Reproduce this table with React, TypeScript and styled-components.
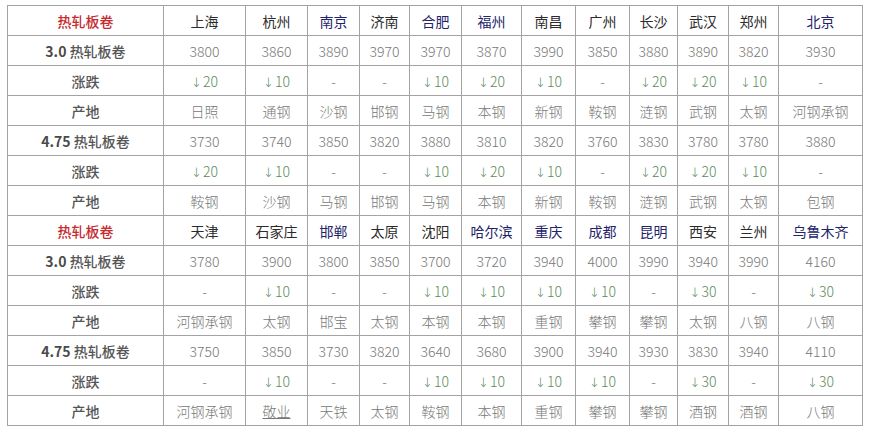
import { createGlobalStyle } from 'styled-components';
import styled from 'styled-components';

const GlobalStyle = createGlobalStyle`
  body {
    margin: 0;
    background: #fff;
    font-family: "Noto Sans CJK SC", "Noto Sans", sans-serif;
  }
`;

const Page = styled.div`
  padding: 5px 0 0 7px;
`;

const Table = styled.table`
  border-collapse: collapse;
  table-layout: fixed;
  width: 855px;
  font-size: 14px;
`;

const Cell = styled.td<{ $tone?: 'data' | 'city' | 'navy' | 'up' }>`
  height: 29px;
  padding: 0;
  border: 1px solid #a3a3a3;
  text-align: center;
  white-space: nowrap;
  overflow: hidden;
  color: ${(p) =>
    p.$tone === 'city' ? '#2b2b2b' :
    p.$tone === 'navy' ? '#23236a' :
    p.$tone === 'up' ? '#5b8a5b' : '#777'};
  font-weight: ${(p) => (p.$tone === 'city' || p.$tone === 'navy' ? 400 : 300)};
`;

const Arrow = styled.span`
  font-family: "DejaVu Sans", sans-serif;
  font-size: 13px;
  margin-right: 1px;
`;

const Label = styled.td<{ $red?: boolean }>`
  height: 29px;
  padding: 0;
  border: 1px solid #a3a3a3;
  text-align: center;
  font-weight: 500;
  color: ${(p) => (p.$red ? '#c62a2f' : '#555')};
`;

const Size = styled.b`
  font-weight: 700;
  color: #4a4a4a;
`;

const Under = styled.span`
  text-decoration: underline;
`;

const widths = [156, 82, 62, 52, 50, 52, 60, 54, 54, 48, 51, 50, 84];

type Block = {
  cities: string[];
  navy: string[];
  thin: string[];
  thinDiff: string[];
  thinFrom: string[];
  thick: string[];
  thickDiff: string[];
  thickFrom: string[];
};

const blocks: Block[] = [
  {
    cities: ['上海', '杭州', '南京', '济南', '合肥', '福州', '南昌', '广州', '长沙', '武汉', '郑州', '北京'],
    navy: ['南京', '合肥', '福州', '北京'],
    thin: ['3800', '3860', '3890', '3970', '3970', '3870', '3990', '3850', '3880', '3890', '3820', '3930'],
    thinDiff: ['20', '10', '', '', '10', '20', '10', '', '20', '20', '10', ''],
    thinFrom: ['日照', '通钢', '沙钢', '邯钢', '马钢', '本钢', '新钢', '鞍钢', '涟钢', '武钢', '太钢', '河钢承钢'],
    thick: ['3730', '3740', '3850', '3820', '3880', '3810', '3820', '3760', '3830', '3780', '3780', '3880'],
    thickDiff: ['20', '10', '', '', '10', '20', '10', '', '20', '20', '10', ''],
    thickFrom: ['鞍钢', '沙钢', '马钢', '邯钢', '马钢', '本钢', '新钢', '鞍钢', '涟钢', '武钢', '太钢', '包钢'],
  },
  {
    cities: ['天津', '石家庄', '邯郸', '太原', '沈阳', '哈尔滨', '重庆', '成都', '昆明', '西安', '兰州', '乌鲁木齐'],
    navy: ['邯郸', '哈尔滨', '重庆', '成都', '昆明', '乌鲁木齐'],
    thin: ['3780', '3900', '3800', '3850', '3700', '3720', '3940', '4000', '3990', '3940', '3990', '4160'],
    thinDiff: ['', '10', '', '', '10', '10', '10', '10', '', '30', '', '30'],
    thinFrom: ['河钢承钢', '太钢', '邯宝', '太钢', '本钢', '本钢', '重钢', '攀钢', '攀钢', '太钢', '八钢', '八钢'],
    thick: ['3750', '3850', '3730', '3820', '3640', '3680', '3900', '3940', '3930', '3830', '3940', '4110'],
    thickDiff: ['', '10', '', '', '10', '10', '10', '10', '', '30', '', '30'],
    thickFrom: ['河钢承钢', '敬业', '天铁', '太钢', '鞍钢', '本钢', '重钢', '攀钢', '攀钢', '酒钢', '酒钢', '八钢'],
  },
];

const DiffRow = ({ values }: { values: string[] }) => (
  <tr>
    <Label>涨跌</Label>
    {values.map((v, i) =>
      v ? <Cell key={i} $tone="up"><Arrow>↓</Arrow>{v}</Cell> : <Cell key={i}>-</Cell>
    )}
  </tr>
);

const PlainRow = ({ label, size, values }: { label: string; size?: string; values: string[] }) => (
  <tr>
    <Label>{size && <Size>{size} </Size>}{label}</Label>
    {values.map((v, i) => (
      <Cell key={i}>{v === '敬业' ? <Under>{v}</Under> : v}</Cell>
    ))}
  </tr>
);

const App = () => (
  <Page>
    <GlobalStyle />
    <Table>
      <colgroup>
        {widths.map((w, i) => <col key={i} style={{ width: w }} />)}
      </colgroup>
      <tbody>
        {blocks.map((b, bi) => [
          <tr key={`h${bi}`}>
            <Label $red>热轧板卷</Label>
            {b.cities.map((c) => (
              <Cell key={c} $tone={b.navy.includes(c) ? 'navy' : 'city'}>{c}</Cell>
            ))}
          </tr>,
          <PlainRow key={`a${bi}`} size="3.0" label="热轧板卷" values={b.thin} />,
          <DiffRow key={`b${bi}`} values={b.thinDiff} />,
          <PlainRow key={`c${bi}`} label="产地" values={b.thinFrom} />,
          <PlainRow key={`d${bi}`} size="4.75" label="热轧板卷" values={b.thick} />,
          <DiffRow key={`e${bi}`} values={b.thickDiff} />,
          <PlainRow key={`f${bi}`} label="产地" values={b.thickFrom} />,
        ])}
      </tbody>
    </Table>
  </Page>
);

export default App;
